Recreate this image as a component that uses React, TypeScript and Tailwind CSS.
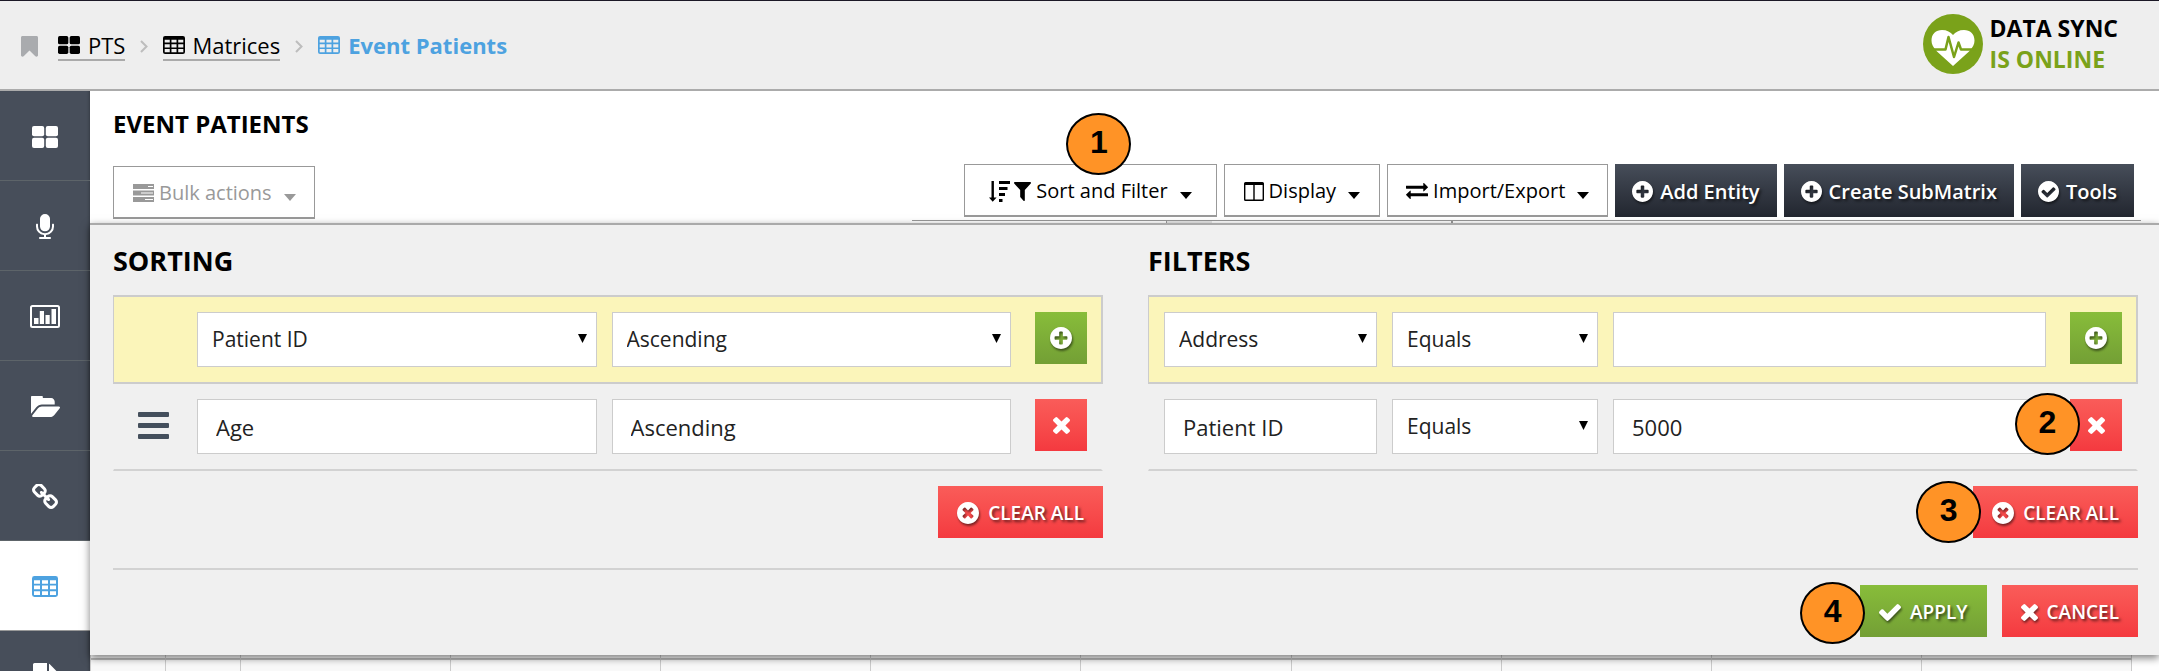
import React from 'react';

type IconProps = { className?: string };

const RING =
  'm0 0q0 209-103 385.500t-279.500 279.500-385.500 103-385.500-103-279.500-279.500-103-385.500 103-385.500 279.500-279.500 385.500-103 385.500 103 279.500 279.500 103 385.500z';

function Glyph({ box, d, className }: { box: string; d: string; className?: string }) {
  return (
    <svg viewBox={box} className={`shrink-0 ${className ?? ''}`} fill="currentColor" aria-hidden="true" preserveAspectRatio="none">
      <path d={d} fillRule="evenodd" />
    </svg>
  );
}

const GridIcon = ({ className }: IconProps) => (
  <svg viewBox="0 0 26 22" className={`shrink-0 ${className}`} fill="currentColor" aria-hidden="true" preserveAspectRatio="none">
    <rect width="12.200" height="10.200" rx="2" />
    <rect x="13.800" width="12.200" height="10.200" rx="2" />
    <rect y="11.800" width="12.200" height="10.200" rx="2" />
    <rect x="13.800" y="11.800" width="12.200" height="10.200" rx="2" />
  </svg>
);

const TableIcon = ({ className }: IconProps) => (
  <Glyph
    className={className}
    box="0 0 26 22"
    d="M2.500 0h21a2.500 2.500 0 0 1 2.500 2.500v17a2.500 2.500 0 0 1-2.500 2.500h-21a2.500 2.500 0 0 1-2.500-2.500v-17a2.500 2.500 0 0 1 2.500-2.500zM2 4.500v3.500h6v-3.500zM10 4.500v3.500h6v-3.500zM18 4.500v3.500h6v-3.500zM2 10v4h6v-4zM10 10v4h6v-4zM18 10v4h6v-4zM2 16v4h6v-4zM10 16v4h6v-4zM18 16v4h6v-4z"
  />
);

const BookmarkIcon = ({ className }: IconProps) => (
  <Glyph
    className={className}
    box="256 128 1280 1536"
    d="M1420 128q23 0 44 9 33 13 52.500 41t19.500 62v1289q0 34-19.500 62t-52.500 41q-19 8-44 8-48 0-83-32l-441-424-441 424q-36 33-83 33-23 0-44-9-33-13-52.500-41t-19.500-62v-1289q0-34 19.500-62t52.500-41q21-9 44-9h1048z"
  />
);

const MicIcon = ({ className }: IconProps) => (
  <Glyph
    className={className}
    box="320 0 1152 1664"
    d="M1472 704v128q0 221-147.500 384.500t-364.500 187.500v132h256q26 0 45 19t19 45-19 45-45 19h-640q-26 0-45-19t-19-45 19-45 45-19h256v-132q-217-24-364.500-187.500t-147.500-384.500v-128q0-26 19-45t45-19 45 19 19 45v128q0 185 131.500 316.500t316.500 131.500 316.500-131.500 131.500-316.500v-128q0-26 19-45t45-19 45 19 19 45zm-256-384v512q0 132-94 226t-226 94-226-94-94-226v-512q0-132 94-226t226-94 226 94 94 226z"
  />
);

const ChartIcon = ({ className }: IconProps) => (
  <svg viewBox="0 0 30 23" className={`shrink-0 ${className}`} aria-hidden="true">
    <rect x="1" y="1" width="28" height="21" rx="1.500" fill="none" stroke="currentColor" strokeWidth="2" />
    <path fill="currentColor" d="M4 13h4.500v6h-4.500zM9.800 6h4.200v13h-4.200zM15.500 10h4.200v9h-4.200zM21.500 4h4.500v15h-4.500z" />
  </svg>
);

const FolderIcon = ({ className }: IconProps) => (
  <Glyph
    className={className}
    box="0 256 1879 1280"
    d="M1879 952q0 31-31 66l-336 396q-43 51-120.500 86.500t-143.500 35.500h-1088q-34 0-60.500-13t-26.500-43q0-31 31-66l336-396q43-51 120.500-86.500t143.500-35.500h1088q34 0 60.500 13t26.500 43zm-343-344v160h-832q-94 0-197 47.500t-164 119.500l-337 396-5 6q0-4-.5-12.500t-.5-12.500v-960q0-92 66-158t158-66h320q92 0 158 66t66 158v32h544q92 0 158 66t66 158z"
  />
);

const LinkIcon = ({ className }: IconProps) => (
  <Glyph
    className={className}
    box="80 80 1632 1568"
    d="M1520 1216q0-40-28-68l-208-208q-28-28-68-28-42 0-72 32 3 3 19 18.500t21.500 21.500 15 19 13 25.500 3.500 27.500q0 40-28 68t-68 28q-15 0-27.500-3.500t-25.500-13-19-15-21.500-21.500-18.500-19q-33 31-33 73 0 40 28 68l206 207q27 27 68 27 40 0 68-26l147-146q28-28 28-67zm-703-705q0-40-28-68l-206-207q-28-28-68-28-39 0-68 27l-147 146q-28 28-28 67 0 40 28 68l208 208q27 27 68 27 42 0 72-31-3-3-19-18.500t-21.500-21.500-15-19-13-25.500-3.500-27.500q0-40 28-68t68-28q15 0 27.500 3.500t25.500 13 19 15 21.500 21.500 18.500 19q33-31 33-73zm895 705q0 120-85 203l-147 146q-83 83-203 83-121 0-204-85l-206-207q-83-83-83-203 0-123 88-209l-88-88q-86 88-208 88-120 0-204-84l-208-208q-84-84-84-204t85-203l147-146q83-83 203-83 121 0 204 85l206 207q83 83 83 203 0 123-88 209l88 88q86-88 208-88 120 0 204 84l208 208q84 84 84 204z"
  />
);

const FileIcon = ({ className }: IconProps) => (
  <Glyph
    className={className}
    box="128 0 1536 1792"
    d="M1152 512v-472q22 14 36 28l408 408q14 14 28 36h-472zm-128 32q0 40 28 68t68 28h544v1056q0 40-28 68t-68 28h-1344q-40 0-68-28t-28-68v-1600q0-40 28-68t68-28h800v544z"
  />
);

const PlusCircle = ({ className }: IconProps) => (
  <Glyph
    className={className}
    box="128 128 1536 1536"
    d={'M1344 960v-128q0-26-19-45t-45-19h-256v-256q0-26-19-45t-45-19h-128q-26 0-45 19t-19 45v256h-256q-26 0-45 19t-19 45v128q0 26 19 45t45 19h256v256q0 26 19 45t45 19h128q26 0 45-19t19-45v-256h256q26 0 45-19t19-45zM1664 896' + RING}
  />
);

const CheckCircle = ({ className }: IconProps) => (
  <Glyph
    className={className}
    box="128 128 1536 1536"
    d={'M1412 734q0-28-18-46l-91-90q-19-19-45-19t-45 19l-408 407-226-226q-19-19-45-19t-45 19l-91 90q-18 18-18 46 0 27 18 45l362 362q19 19 45 19 27 0 46-19l543-543q18-18 18-45zM1664 896' + RING}
  />
);

const TimesCircle = ({ className }: IconProps) => (
  <Glyph
    className={className}
    box="128 128 1536 1536"
    d={'M1277 1122q0-26-19-45l-181-181 181-181q19-19 19-45 0-27-19-46l-90-90q-19-19-46-19-26 0-45 19l-181 181-181-181q-19-19-45-19-27 0-46 19l-90 90q-19 19-19 46 0 26 19 45l181 181-181 181q-19 19-19 45 0 27 19 46l90 90q19 19 46 19 26 0 45-19l181-181 181 181q19 19 45 19 27 0 46-19l90-90q19-19 19-46zM1664 896' + RING}
  />
);

const TimesIcon = ({ className }: IconProps) => (
  <Glyph
    className={className}
    box="302 366 1188 1188"
    d="M1490 1322q0 40-28 68l-136 136q-28 28-68 28t-68-28l-294-294-294 294q-28 28-68 28t-68-28l-136-136q-28-28-28-68t28-68l294-294-294-294q-28-28-28-68t28-68l136-136q28-28 68-28t68 28l294 294 294-294q28-28 68-28t68 28l136 136q28 28 28 68t-28 68l-294 294 294 294q28 28 28 68z"
  />
);

const CheckIcon = ({ className }: IconProps) => (
  <Glyph
    className={className}
    box="121 334 1550 1188"
    d="M1671 566q0 40-28 68l-724 724-136 136q-28 28-68 28t-68-28l-136-136-362-362q-28-28-28-68t28-68l136-136q28-28 68-28t68 28l294 295 656-657q28-28 68-28t68 28l136 136q28 28 28 68z"
  />
);

const FilterIcon = ({ className }: IconProps) => (
  <Glyph
    className={className}
    box="192 256 1408 1408"
    d="M1595 295q17 41-14 70l-493 493v742q0 42-39 59-13 5-25 5-27 0-45-19l-256-256q-19-19-19-45v-486l-493-493q-31-29-14-70 17-39 59-39h1280q42 0 59 39z"
  />
);

const ExchangeIcon = ({ className }: IconProps) => (
  <Glyph
    className={className}
    box="0 288 1792 1344"
    d="M1792 1184v192q0 13-9.500 22.500t-22.500 9.500h-1376v192q0 13-9.500 22.500t-22.500 9.500q-12 0-24-10l-319-320q-9-9-9-22 0-14 9-23l320-320q9-9 23-9 13 0 22.500 9.500t9.500 22.500v192h1376q13 0 22.500 9.500t9.500 22.500zm0-544q0 14-9 23l-320 320q-9 9-23 9-13 0-22.500-9.500t-9.500-22.500v-192h-1376q-13 0-22.500-9.500t-9.500-22.500v-192q0-13 9.500-22.500t22.500-9.500h1376v-192q0-14 9-23t23-9q12 0 24 10l319 319q9 9 9 23z"
  />
);

const SortIcon = ({ className }: IconProps) => (
  <Glyph
    className={className}
    box="0 0 21 21"
    d="M2.500 0h2.400v16.500h2.700l-3.900 4.300-3.700-4.300h2.500zM10 0h11v3h-11zM10 6h8.500v3h-8.500zM10 12h6v3h-6zM10 18h3.500v3h-3.500z"
  />
);

const ColumnsIcon = ({ className }: IconProps) => (
  <Glyph
    className={className}
    box="0 0 20 19"
    d="M1.500 0h17a1.500 1.500 0 0 1 1.500 1.500v16a1.500 1.500 0 0 1-1.500 1.500h-17a1.500 1.500 0 0 1-1.500-1.500v-16a1.500 1.500 0 0 1 1.500-1.500zM1.400 3v14.500h7.900v-14.500zM10.700 3v14.500h7.900v-14.500z"
  />
);

const TasksIcon = ({ className }: IconProps) => (
  <Glyph
    className={className}
    box="0 0 21 18"
    d="M0 0h21v5h-21zM0 6.500h21v5h-21zM0 13h21v5h-21zM15 2v1h5v-1zM8 8.500v1h12v-1zM12 15v1h8v-1z"
  />
);

const Caret = ({ className }: IconProps) => (
  <svg viewBox="0 0 12 7" className={`mt-2 ml-3 h-[7px] w-3 shrink-0 ${className ?? ''}`} fill="currentColor" aria-hidden="true">
    <path d="M0 0h12l-6 7z" />
  </svg>
);

const Chevron = () => (
  <svg viewBox="0 0 8 13" className="h-[13px] w-2 shrink-0" fill="none" stroke="#bdbdbd" strokeWidth="2" aria-hidden="true">
    <path d="M1 1l5.500 5.500-5.500 5.500" />
  </svg>
);

const HeartbeatIcon = () => (
  <svg viewBox="0 0 60 60" className="size-[60px] shrink-0" aria-hidden="true">
    <circle cx="30" cy="30" r="30" fill="#7aa21a" />
    <path fill="#fff" d="M30 52L14 37.500C10 33.500 8.500 30 8.500 26.500C8.500 20 13 16 19 16C24 16 27.500 18 30 21C32.500 18 36 16 41 16C47 16 51.500 20 51.500 26.500C51.500 30 50 33.500 46 37.500Z" />
    <path fill="none" stroke="#7aa21a" strokeWidth="2.500" strokeLinejoin="round" d="M7 35.500H22.500L25.500 23L31 43L35.500 28.500L38 35.500H53" />
  </svg>
);

function Badge({ n, className }: { n: number; className: string }) {
  return (
    <span
      className={`absolute z-10 flex h-[62px] w-[65px] items-center justify-center rounded-[50%] border-2 border-black bg-[#ff9326] pb-1 font-['Liberation_Sans',sans-serif] text-[32px] leading-none font-bold text-black [text-shadow:none] ${className}`}
    >
      {n}
    </span>
  );
}

const outlineBtn = 'flex h-[53px] items-center border border-b-2 border-[#999] bg-white pt-0.5 text-xl font-medium whitespace-nowrap';
const darkBtn =
  'flex h-[53px] items-center gap-[7px] bg-linear-to-b from-[#474e5a] to-[#22262f] px-[17px] pt-0.5 text-xl font-semibold whitespace-nowrap text-white [text-shadow:2px_2px_3px_rgba(0,0,0,0.6)]';
const solidBtn =
  'relative flex h-[52px] items-center justify-center gap-[9px] bg-linear-to-b text-[19px] font-semibold whitespace-nowrap text-white [text-shadow:2px_2px_3px_rgba(0,0,0,0.6)]';
const red = 'from-[#fa5c59] to-[#f4393f]';
const green = 'from-[#88bd3a] to-[#739f35]';
const iconShadow = 'drop-shadow-[1px_2px_1px_rgba(0,0,0,0.5)]';
const field = 'h-[55px] w-full min-w-0 rounded-none border border-[#ccc] bg-white text-[#222]';
const sortGrid = 'grid grid-cols-[53px_1fr_1fr_61px] gap-[15px] py-[15px] pr-[14px] pl-[15px]';
const filterGrid = 'grid grid-cols-[213fr_206fr_433fr_61px] gap-[15px] py-[15px] pr-[14px] pl-[15px]';
const highlighted = 'border border-t-2 border-r-2 border-b-2 border-[#ccc] bg-[#fbf5ba]';
const plain = 'border-x border-r-2 border-b-2 border-x-transparent border-b-[#d2d2d2]';

function Select({ label, options }: { label: string; options: string[] }) {
  return (
    <div className="relative">
      <select aria-label={label} className={`${field} appearance-none pr-8 pl-[14px] text-[21px]`}>
        {options.map((o) => (
          <option key={o}>{o}</option>
        ))}
      </select>
      <svg viewBox="0 0 9 9" className="pointer-events-none absolute top-[22px] right-[10px] size-[9px]" aria-hidden="true">
        <path d="M0 0h9l-4.500 9z" />
      </svg>
    </div>
  );
}

function Text({ label, value }: { label: string; value: string }) {
  return <input aria-label={label} defaultValue={value} className={`${field} px-[18px] text-[22px]`} />;
}

function IconButton({ label, tone, children }: { label: string; tone: string; children: React.ReactNode }) {
  return (
    <button aria-label={label} className={`${solidBtn} ${tone} ml-[9px]`}>
      {children}
    </button>
  );
}

const nav = [
  { label: 'Dashboard', Icon: GridIcon, size: 'h-[22px] w-[26px]' },
  { label: 'Voice', Icon: MicIcon, size: 'h-[25px] w-[18px]' },
  { label: 'Reports', Icon: ChartIcon, size: 'h-[23px] w-[30px]' },
  { label: 'Files', Icon: FolderIcon, size: 'h-[21px] w-[29px]' },
  { label: 'Links', Icon: LinkIcon, size: 'h-[25px] w-[26px]' },
  { label: 'Matrices', Icon: TableIcon, size: 'h-[21px] w-[26px]', active: true },
  { label: 'Documents', Icon: FileIcon, size: 'h-[28px] w-6' },
];

export default function App() {
  return (
    <div className="flex h-screen flex-col overflow-hidden bg-white font-['Open_Sans',sans-serif] text-black">
      <header className="flex h-[91px] shrink-0 items-center justify-between border-t border-b-2 border-t-[#1b1826] border-b-[#ababab] bg-[#eee] pr-[41px] pl-[21px]">
        <nav aria-label="Breadcrumb" className="flex items-center pt-0.5 text-[22px] leading-7">
          <BookmarkIcon className="mr-5 h-[21px] w-[17px] text-[#a9abae]" />
          <a href="#pts" className="flex items-center gap-2 border-b-2 border-[#aaa]">
            <GridIcon className="h-[18px] w-[22px]" />
            PTS
          </a>
          <span className="mx-[15px]"><Chevron /></span>
          <a href="#matrices" className="flex items-center gap-[7px] border-b-2 border-[#aaa]">
            <TableIcon className="h-[18px] w-[22px]" />
            Matrices
          </a>
          <span className="mx-[15px]"><Chevron /></span>
          <span className="flex items-center gap-2 border-b-2 border-transparent font-bold text-[#4da2e0]" aria-current="page">
            <TableIcon className="h-[18px] w-[22px]" />
            Event Patients
          </span>
        </nav>
        <div className="flex items-center gap-[7px] pb-[3px] text-[23px] leading-[31px] font-bold">
          <HeartbeatIcon />
          <p>
            DATA SYNC
            <br />
            <span className="text-[#7aa21a]">IS ONLINE</span>
          </p>
        </div>
      </header>

      <div className="flex min-h-0 flex-1">
        <nav aria-label="Main" className="flex w-[90px] shrink-0 flex-col bg-[#474e5a] shadow-[inset_-3px_0_3px_-2px_rgba(0,0,0,0.25)]">
          {nav.map(({ label, Icon, size, active }) => (
            <a
              key={label}
              href={`#${label.toLowerCase()}`}
              aria-label={label}
              className={`flex h-[90px] shrink-0 items-center justify-center border-b pt-0.5 ${active ? 'border-[#999] bg-white text-[#4da2e0]' : 'border-[#5d6469] text-white'}`}
            >
              <Icon className={size} />
            </a>
          ))}
        </nav>

        <main className="flex min-w-0 flex-1 flex-col">
          <div className="pt-[17px] pl-[23px]">
            <h1 className="text-2xl leading-8 font-bold">EVENT PATIENTS</h1>
            <div className="mt-6 flex h-[55px] justify-between pr-[25px]">
              <button className={`${outlineBtn} self-end pr-[18px] pl-[19px] text-[#999]`}>
                <TasksIcon className="mr-[5px] h-[18px] w-[21px]" />
                Bulk actions
                <Caret />
              </button>
              <div className="flex gap-[7px]">
                <button className={`${outlineBtn} relative px-6`}>
                  <Badge n={1} className="top-[-52px] left-[101px]" />
                  <SortIcon className="mr-1 size-[21px]" />
                  <FilterIcon className="mr-[5px] h-[19px] w-[17px]" />
                  Sort and Filter
                  <Caret />
                </button>
                <button className={`${outlineBtn} px-[19px]`}>
                  <ColumnsIcon className="mr-[5px] h-[19px] w-5" />
                  Display
                  <Caret />
                </button>
                <button className={`${outlineBtn} px-[18px]`}>
                  <ExchangeIcon className="mr-[5px] h-4 w-[22px]" />
                  Import/Export
                  <Caret />
                </button>
                <button className={darkBtn}>
                  <PlusCircle className={`size-[21px] ${iconShadow}`} />
                  Add Entity
                </button>
                <button className={darkBtn}>
                  <PlusCircle className={`size-[21px] ${iconShadow}`} />
                  Create SubMatrix
                </button>
                <button className={darkBtn}>
                  <CheckCircle className={`size-[21px] ${iconShadow}`} />
                  Tools
                </button>
              </div>
            </div>
          </div>
          <div className="mt-px mr-[18px] flex h-[3px] w-[1229px] self-end border-t border-[#999]">
            <div className="w-[254px]" />
            <div className="w-[46px] border-l border-[#999] bg-[#e8e8e8]" />
            <div className="w-[241px] border-r-2 border-[#999]" />
          </div>

          <section className="z-10 border-t-2 border-[#aaa] bg-[#f0f0f0] pr-[21px] pb-[18px] pl-[23px] shadow-[0_3px_8px_rgba(0,0,0,0.5)]">
            <div className="grid grid-cols-2 gap-[45px]">
              <div>
                <h2 className="pt-0.5 text-[27px] leading-[68px] font-bold">SORTING</h2>
                <div className={`${sortGrid} ${highlighted}`}>
                  <span />
                  <Select label="Sort column" options={['Patient ID', 'Age']} />
                  <Select label="Sort direction" options={['Ascending', 'Descending']} />
                  <IconButton label="Add sorting" tone={green}>
                    <PlusCircle className={`size-[22px] ${iconShadow}`} />
                  </IconButton>
                </div>
                <div className={`${sortGrid} ${plain}`}>
                  <button aria-label="Reorder" className="flex h-[52px] flex-col justify-center gap-[6px] pl-[9px]">
                    <span className="h-[5px] w-[31px] rounded-[1px] bg-[#444f5c]" />
                    <span className="h-[5px] w-[31px] rounded-[1px] bg-[#444f5c]" />
                    <span className="h-[5px] w-[31px] rounded-[1px] bg-[#444f5c]" />
                  </button>
                  <Text label="Sorted column" value="Age" />
                  <Text label="Sorted direction" value="Ascending" />
                  <IconButton label="Remove sorting" tone={red}>
                    <TimesIcon className="size-[17px]" />
                  </IconButton>
                </div>
                <div className="flex justify-end pt-[15px]">
                  <button className={`${solidBtn} ${red} px-[19px] pt-0.5`}>
                    <TimesCircle className={`size-[22px] ${iconShadow}`} />
                    CLEAR ALL
                  </button>
                </div>
              </div>

              <div>
                <h2 className="pt-0.5 text-[27px] leading-[68px] font-bold">FILTERS</h2>
                <div className={`${filterGrid} ${highlighted}`}>
                  <Select label="Filter column" options={['Address', 'Patient ID']} />
                  <Select label="New filter operator" options={['Equals', 'Contains']} />
                  <Text label="New filter value" value="" />
                  <IconButton label="Add filter" tone={green}>
                    <PlusCircle className={`size-[22px] ${iconShadow}`} />
                  </IconButton>
                </div>
                <div className={`${filterGrid} ${plain}`}>
                  <Text label="Filtered column" value="Patient ID" />
                  <Select label="Filter operator" options={['Equals', 'Contains']} />
                  <Text label="Filter value" value="5000" />
                  <IconButton label="Remove filter" tone={red}>
                    <Badge n={2} className="top-[-6px] left-[-55px]" />
                    <TimesIcon className="size-[17px]" />
                  </IconButton>
                </div>
                <div className="flex justify-end pt-[15px]">
                  <button className={`${solidBtn} ${red} px-[19px] pt-0.5`}>
                    <Badge n={3} className="top-[-5px] left-[-57px]" />
                    <TimesCircle className={`size-[22px] ${iconShadow}`} />
                    CLEAR ALL
                  </button>
                </div>
              </div>
            </div>
            <div className="mt-[30px] flex justify-end gap-[15px] border-t-2 border-[#d2d2d2] pt-[15px]">
              <button className={`${solidBtn} ${green} px-[19px] pt-0.5`}>
                <Badge n={4} className="top-[-3px] left-[-60px]" />
                <CheckIcon className={`h-[17px] w-[22px] ${iconShadow}`} />
                APPLY
              </button>
              <button className={`${solidBtn} ${red} px-[19px] pt-0.5`}>
                <TimesIcon className={`size-[17px] ${iconShadow}`} />
                CANCEL
              </button>
            </div>
          </section>

          <div className="mr-[27px] grid flex-1 grid-cols-[75px_75px_repeat(9,1fr)] grid-rows-[5px_1fr] border-l border-[#ccc]">
            {Array.from({ length: 22 }, (_, i) => (
              <div key={i} className={`border-r border-[#ccc] bg-[#f9f9f9] ${i < 11 ? 'border-b-2 border-b-[#bbb]' : ''}`} />
            ))}
          </div>
        </main>
      </div>
    </div>
  );
}
